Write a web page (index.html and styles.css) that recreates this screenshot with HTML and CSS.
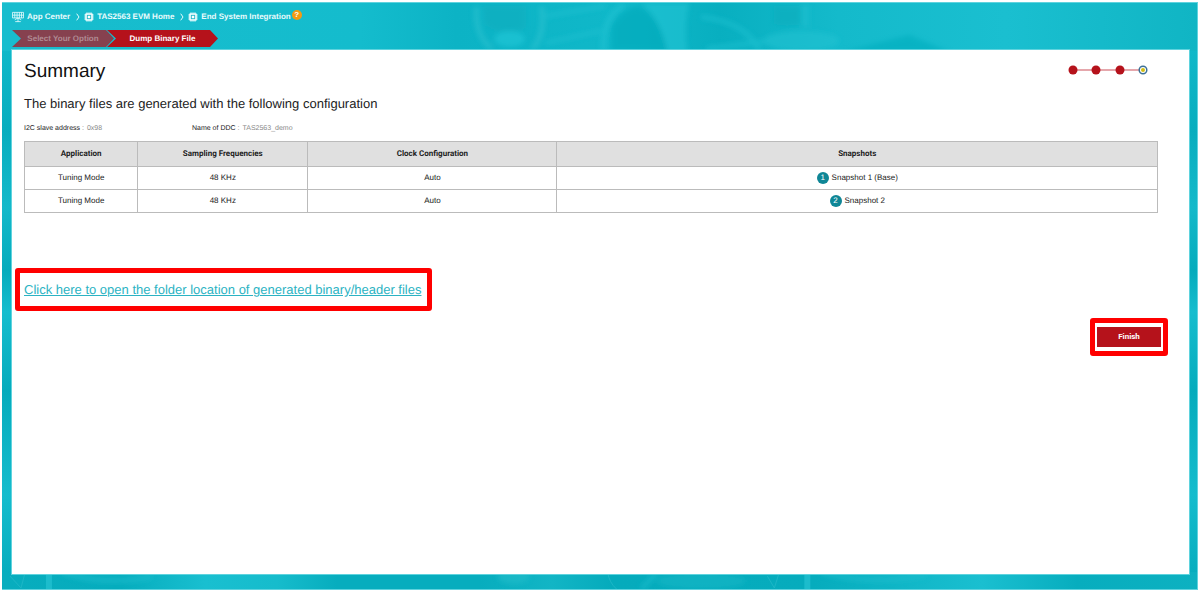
FILE: index.html
```html
<!DOCTYPE html>
<html lang="en">
<head>
<meta charset="utf-8">
<meta name="viewport" content="width=device-width, initial-scale=1">
<title>End System Integration</title>
<link rel="stylesheet" href="styles.css">
</head>
<body>
<div class="app">
  <svg class="backdrop" viewBox="0 0 1196 588" preserveAspectRatio="none" aria-hidden="true">
    <defs>
      <linearGradient id="sky" x1="0" x2="1">
        <stop offset="0" stop-color="#18bdce"/><stop offset=".3" stop-color="#14bccd"/>
        <stop offset=".38" stop-color="#0cb3c5"/><stop offset=".52" stop-color="#10b8c9"/>
        <stop offset=".6" stop-color="#08afc0"/><stop offset=".7" stop-color="#14bacb"/>
        <stop offset=".84" stop-color="#1abfd0"/><stop offset="1" stop-color="#10b5c4"/>
      </linearGradient>
      <linearGradient id="floor" x1="0" x2="1">
        <stop offset="0" stop-color="#08adbe"/><stop offset=".1" stop-color="#06acbd"/>
        <stop offset=".17" stop-color="#19bfd0"/><stop offset=".23" stop-color="#16bccc"/>
        <stop offset=".28" stop-color="#07adbe"/><stop offset=".4" stop-color="#07adbe"/>
        <stop offset=".46" stop-color="#12b5c5"/><stop offset=".51" stop-color="#05abbc"/>
        <stop offset=".68" stop-color="#06acbd"/><stop offset=".82" stop-color="#1abfd0"/>
        <stop offset=".9" stop-color="#07adbe"/><stop offset="1" stop-color="#0db1c1"/>
      </linearGradient>
      <linearGradient id="side" x1="0" x2="0" y1="0" y2="1">
        <stop offset="0" stop-color="#10b8c9"/><stop offset=".15" stop-color="#08adbe"/>
        <stop offset=".3" stop-color="#14b9ca"/><stop offset=".42" stop-color="#05abbc"/>
        <stop offset=".5" stop-color="#16bdce"/><stop offset=".65" stop-color="#05abbc"/>
        <stop offset=".85" stop-color="#15bccd"/><stop offset="1" stop-color="#07adbe"/>
      </linearGradient>
      <filter id="soft"><feGaussianBlur stdDeviation="2.500"/></filter>
    </defs>
    <rect width="1196" height="49" fill="url(#sky)"/>
    <rect y="48" width="11" height="524" fill="url(#side)"/>
    <rect x="1185" y="48" width="11" height="524" fill="url(#side)"/>
    <rect y="571" width="1196" height="17" fill="url(#floor)"/>
    <g filter="url(#soft)" fill="none" opacity=".6">
      <path d="M475 4q-2 28 15 42M540 4q4 28-9 42" stroke="#2fc3d0" stroke-width="5"/>
      <path d="M482 3h42v22q-22 10-40-3z" fill="#15a9b8" opacity=".6"/>
      <ellipse cx="508" cy="36" rx="15" ry="8" fill="#23c8d8"/>
      <path d="M544 13l60-10M544 40l56-12" stroke="#20c1d1" stroke-width="4"/>
      <path d="M610 48V24q10-20 28-20 20 10 28 44z" fill="#04a9ba"/>
      <path d="M602 48q-1-35 20-46" stroke="#24c4d4" stroke-width="5"/>
      <path d="M640 0q20 16 26 50h20q-4-30 2-50z" fill="#24c4d4"/>
      <path d="M700 14q45 5 58 34M705 46l65-8" stroke="#24c4d4" stroke-width="4"/>
      <path d="M772 3h28v18q-14 4-28 0z" fill="#08adbd"/>
      <path d="M804 2v22" stroke="#1fc0d0" stroke-width="8"/>
      <ellipse cx="800" cy="38" rx="38" ry="10" fill="#20c2d2"/>
      <path d="M838 50l70-18 42 18z" fill="#05adbe"/>
      <path d="M60 571q40 14 90 5M710 571l-8 17M820 571q50 14 105 3M655 572l-15 16" stroke="#1cbece" stroke-width="5"/>
      <ellipse cx="512" cy="576" rx="16" ry="7" fill="#23bdca"/>
      <ellipse cx="700" cy="580" rx="45" ry="8" fill="#17b7c6"/>
    </g>
    <path d="M8 575l11 12 4-15M778 571l-5 16-7-12M606 571q2 11 9 17" fill="none" stroke="#1cb6c6"/>
    <path d="M47 571v17M806 571v17" stroke="#1cbccc" stroke-width="6"/>
  </svg>

  <header class="header">
    <nav aria-label="Breadcrumb">
      <ol class="crumbs">
        <li class="crumb">
          <a class="crumb-link" href="#">
            <svg class="icon-board" viewBox="0 0 13 12" aria-hidden="true">
              <path d="M.5 1h12v6H.5zM.5 4h12M3 1v6M5.500 1v6M8 1v6M10.300 1v6M6.500 7v4M3.500 11h6M3 9l3.500-2L10 9" fill="none" stroke="#e4fafc" stroke-width=".9"/>
            </svg>
            App Center
          </a>
        </li>
        <li class="crumb">
          <svg class="icon-next" viewBox="0 0 4 8" aria-hidden="true"><path d="M.7.7 3 4 .7 7.300" fill="none" stroke="#e4fafc"/></svg>
          <a class="crumb-link" href="#">
            <svg class="icon-chip" viewBox="0 0 10 10" aria-hidden="true">
              <path d="M3 0v10M5 0v10M7 0v10M0 3h10M0 5h10M0 7h10" stroke="#c5f0f4" stroke-width=".8"/>
              <rect x="1.200" y="1.200" width="7.600" height="7.600" rx="1" fill="#f2fdfe"/>
              <rect x="3.300" y="3.300" width="3.400" height="3.400" fill="#fff" stroke="#22b9c9" stroke-width=".9"/>
            </svg>
            TAS2563 EVM Home
          </a>
        </li>
        <li class="crumb">
          <svg class="icon-next" viewBox="0 0 4 8" aria-hidden="true"><path d="M.7.7 3 4 .7 7.300" fill="none" stroke="#e4fafc"/></svg>
          <a class="crumb-link" href="#" aria-current="page">
            <svg class="icon-chip" viewBox="0 0 10 10" aria-hidden="true">
              <path d="M3 0v10M5 0v10M7 0v10M0 3h10M0 5h10M0 7h10" stroke="#c5f0f4" stroke-width=".8"/>
              <rect x="1.200" y="1.200" width="7.600" height="7.600" rx="1" fill="#f2fdfe"/>
              <rect x="3.300" y="3.300" width="3.400" height="3.400" fill="#fff" stroke="#22b9c9" stroke-width=".9"/>
            </svg>
            End System Integration
          </a>
          <button class="help" type="button" aria-label="Help">?</button>
        </li>
      </ol>
    </nav>
    <ol class="steps">
      <li class="step step-done">Select Your Option</li>
      <li class="step step-current" aria-current="step">Dump Binary File</li>
    </ol>
  </header>

  <main class="panel">
    <div class="title-row">
      <h1 class="title">Summary</h1>
      <svg class="progress" viewBox="0 0 80 10" role="img" aria-label="Step 4 of 4">
        <path d="M5 5h66" stroke="#dc8a90" stroke-width="1.500"/>
        <circle cx="5" cy="5" r="4.500" fill="#b5121b"/>
        <circle cx="28" cy="5" r="4.500" fill="#b5121b"/>
        <circle cx="52" cy="5" r="4.500" fill="#b5121b"/>
        <circle cx="75" cy="5" r="3.800" fill="#fff" stroke="#3d7196" stroke-width="1.500"/>
        <circle cx="75" cy="5" r="2" fill="#d2bd12"/>
      </svg>
    </div>
    <h2 class="subtitle">The binary files are generated with the following configuration</h2>
    <dl class="facts">
      <div class="fact"><dt>I2C slave address&nbsp;<span class="colon">:</span></dt><dd>0x98</dd></div>
      <div class="fact"><dt>Name of DDC&nbsp;<span class="colon">:</span></dt><dd>TAS2563_demo</dd></div>
    </dl>
    <table class="summary">
      <colgroup><col class="col-app"><col class="col-freq"><col class="col-clock"><col></colgroup>
      <thead>
        <tr><th>Application</th><th>Sampling Frequencies</th><th>Clock Configuration</th><th>Snapshots</th></tr>
      </thead>
      <tbody>
        <tr><td>Tuning Mode</td><td>48 KHz</td><td>Auto</td><td><span class="snapshot"><span class="badge">1</span>Snapshot 1 (Base)</span></td></tr>
        <tr><td>Tuning Mode</td><td>48 KHz</td><td>Auto</td><td><span class="snapshot"><span class="badge">2</span>Snapshot 2</span></td></tr>
      </tbody>
    </table>
    <div class="callout callout-link">
      <a class="folder-link" href="#">Click here to open the folder location of generated binary/header files</a>
    </div>
    <div class="callout callout-finish">
      <button class="finish" type="button">Finish</button>
    </div>
  </main>
</div>
</body>
</html>
```
FILE: styles.css
```css
* { box-sizing: border-box; }

body {
  margin: 0;
  padding: 2px;
  min-height: 100vh;
  display: flex;
  background: #fff;
  color: #222;
  font: 8px/12px "Liberation Sans", Arial, sans-serif;
  text-rendering: geometricPrecision;
}

ol, dl, dd, h1, h2 { margin: 0; padding: 0; list-style: none; font-weight: normal; }

.app {
  position: relative;
  isolation: isolate;
  flex: 1;
  display: flex;
  flex-direction: column;
  padding: 0 8px 15px 10px;
  border: 1px solid #5fd3de;
  border-left-width: 0;
}

.backdrop {
  position: absolute;
  inset: 0;
  z-index: -1;
  width: 100%;
  height: 100%;
}

.header { padding: 7px 0 3px; }

.crumbs { display: flex; align-items: center; height: 14px; }
.crumb { display: flex; align-items: center; font-weight: bold; }
.crumb-link {
  display: flex;
  align-items: center;
  gap: 3px;
  color: #e9fbfc;
  text-decoration: none;
}
.icon-board { width: 12px; height: 12px; }
.icon-next { width: 4px; height: 8px; margin: 0 4px 0 6px; }
.icon-chip { width: 10px; height: 10px; }

.help {
  width: 10px;
  height: 10px;
  margin: 0 0 5px 1px;
  padding: 0;
  border: 0;
  border-radius: 50%;
  background: #f79a10;
  color: #fff;
  font: bold 8px/10px "Liberation Sans", Arial, sans-serif;
}

.steps { display: flex; margin-top: 6px; font-weight: bold; }
.step { height: 17px; line-height: 17px; text-align: center; }
.step-done {
  width: 102px;
  background: #86414f;
  color: #b08b93;
  clip-path: polygon(0 0, 94px 0, 100% 50%, 94px 100%, 0 100%, 9px 50%);
}
.step-current {
  width: 111px;
  margin-left: -7px;
  background: #b5121b;
  color: #fff;
  clip-path: polygon(0 0, 103px 0, 100% 50%, 103px 100%, 0 100%, 9px 50%);
}

.panel {
  flex: 1;
  display: flex;
  flex-direction: column;
  padding: 10px 31px 12px 12px;
  background: #fff;
  outline: 1px solid #5fd3de;
}

.title-row { display: flex; justify-content: space-between; align-items: center; }
.title { font-size: 19px; line-height: 24px; color: #111; }
.progress { width: 80px; height: 10px; margin: 0 10px 4px 0; }
.subtitle { margin-top: 10px; font-size: 13px; line-height: 20px; }

.facts { display: flex; margin-top: 9px; font-size: 7px; }
.fact { display: flex; gap: 3px; width: 168px; }
.fact dd, .colon { color: #888; }

.summary {
  width: 100%;
  margin-top: 6px;
  border-collapse: collapse;
  table-layout: fixed;
  text-align: center;
}
.summary th, .summary td { padding: 0; border: 1px solid #bbb; }
.summary th { height: 25px; background: #e0e0e0; font-family: Roboto, Arial, sans-serif; }
.summary td { height: 23px; }
.col-app { width: 10%; }
.col-freq { width: 15%; }
.col-clock { width: 22%; }
.snapshot { display: inline-flex; align-items: center; gap: 3px; vertical-align: middle; }
.badge {
  width: 12px;
  height: 12px;
  border-radius: 50%;
  background: #0f8696;
  color: #fff;
}

.callout { border: 5px solid #f00; border-radius: 3px; }
.callout-link { align-self: flex-start; margin: 55px 0 0 -9px; padding: 9px 6px 8px 4px; }
.folder-link { display: block; color: #2bb3c3; font-size: 13px; line-height: 16px; }

.callout-finish { align-self: flex-end; margin: 7px -10px 0 0; padding: 4px 2px; }
.finish {
  display: block;
  width: 64px;
  height: 20px;
  padding: 0;
  border: 0;
  background: #b5121b;
  color: #fff;
  font: bold 8px/20px Roboto, Arial, sans-serif;
}
```
